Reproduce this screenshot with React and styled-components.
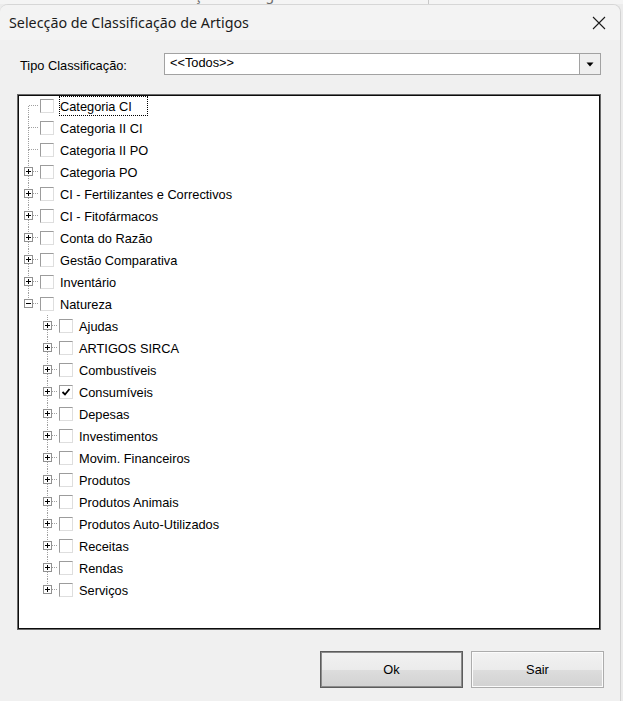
import React from "react";
import styled, { createGlobalStyle } from "styled-components";

const GlobalStyle = createGlobalStyle`
  html, body { margin: 0; padding: 0; background: #ececec; }
  body { font-family: "Liberation Sans", Arial, sans-serif; }
  * { box-sizing: border-box; }
`;

const UI_FONT = "12.8px";

const Page = styled.div`
  width: 623px;
  height: 701px;
  overflow: hidden;
  background: #ececec;
`;

const Backdrop = styled.div`
  display: flex;
  height: 4px;
  overflow: hidden;
  padding-left: 145px;
  background: #f4f4f4;
`;

const BackdropTitle = styled.div`
  width: 283px;
  margin-top: -13px;
  font-family: "Noto Sans", sans-serif;
  font-size: 14px;
  line-height: 16px;
  color: #6a6a6a;
  white-space: nowrap;
`;

const BackdropDivider = styled.div`
  width: 1px;
  background: #c8c8c8;
`;

const Dialog = styled.div`
  width: 621px;
  height: 697px;
  background: #f0f0f0;
  border-top: 1px solid #d6d6d6;
  border-right: 1px solid #d3d3d3;
  border-radius: 8px 8px 0 0;
  overflow: hidden;
  display: flex;
  flex-direction: column;
`;

const TitleBar = styled.div`
  height: 35px;
  display: flex;
  align-items: center;
  justify-content: space-between;
  padding-left: 9px;
  background: #f3f3f3;
`;

const Title = styled.div`
  font-family: "Noto Sans", sans-serif;
  font-size: 14.3px;
  color: #1b1b1b;
  white-space: nowrap;
`;

const CloseButton = styled.div`
  width: 40px;
  height: 35px;
  margin-right: 1px;
  display: flex;
  align-items: center;
  justify-content: center;
`;

const Body = styled.div`
  flex: 1;
  display: flex;
  flex-direction: column;
`;

const FilterRow = styled.div`
  display: flex;
  align-items: center;
  height: 22px;
  margin-top: 13px;
  padding-left: 20px;
`;

const FieldLabel = styled.div`
  width: 144px;
  font-size: ${UI_FONT};
  color: #000;
  padding-top: 3px;
`;

const Combo = styled.div`
  width: 437px;
  height: 22px;
  display: flex;
  background: #fff;
  border: 1px solid #a2a2a2;
`;

const ComboValue = styled.div`
  flex: 1;
  padding-left: 5px;
  font-size: ${UI_FONT};
  line-height: 18px;
  color: #000;
`;

const ComboButton = styled.div`
  width: 21px;
  display: flex;
  align-items: center;
  justify-content: center;
  background: #efefef;
  border-left: 1px solid #a2a2a2;
`;

const Tree = styled.div`
  width: 584px;
  height: 536px;
  margin: 19px 0 0 17px;
  padding-left: 1px;
  background: #fff;
  border: 1px solid #6a6a6a;
  box-shadow: inset 0 0 0 1px #0c0c0c;
`;

const Row = styled.div`
  display: flex;
  align-items: center;
  height: 22px;
`;

const Guide = styled.svg`
  flex: none;
  width: 19px;
  height: 22px;
  display: block;
`;

const CheckBox = styled.div`
  flex: none;
  width: 14px;
  height: 14px;
  margin-left: 2px;
  background: #fff;
  border: 1px solid;
  border-color: #9c9c9c #dedede #dedede #9c9c9c;
  display: flex;
  align-items: center;
  justify-content: center;
`;

const NodeLabel = styled.div`
  height: 20px;
  margin-left: 5px;
  padding: 1px 15px 0 0;
  border: 1px dotted ${(p) => (p.$focused ? "#000" : "transparent")};
  font-size: ${UI_FONT};
  line-height: 17px;
  color: #000;
  white-space: nowrap;
`;

const ButtonBar = styled.div`
  display: flex;
  justify-content: flex-end;
  gap: 8px;
  margin-top: 21px;
  padding-right: 16px;
`;

const Button = styled.div`
  width: ${(p) => p.$width}px;
  height: 37px;
  display: flex;
  align-items: center;
  justify-content: center;
  font-size: ${UI_FONT};
  color: #000;
  background: linear-gradient(#f2f2f2 0%, #ebebeb 50%, #dddddd 50%, #d2d2d2 100%);
  border: 1px solid ${(p) => (p.$default ? "#5c5c5c" : "#acacac")};
  box-shadow: inset 0 0 0 1px ${(p) => (p.$default ? "#8c8c8c" : "#fbfbfb")};
`;

const LINE = "#a0a0a0";

function TreeGuide({ own, vertTop, vertBottom, full, expandable, expanded }) {
  return (
    <Guide viewBox="0 0 19 22" shapeRendering="crispEdges">
      {full && (
        <line x1="9.5" y1="0" x2="9.5" y2="22" stroke={LINE} strokeDasharray="1 1" />
      )}
      {own && vertTop && (
        <line x1="9.5" y1="0" x2="9.5" y2="11" stroke={LINE} strokeDasharray="1 1" />
      )}
      {own && vertBottom && (
        <line x1="9.5" y1="11" x2="9.5" y2="22" stroke={LINE} strokeDasharray="1 1" />
      )}
      {own && (
        <line
          x1={expandable ? 14 : 10}
          y1="10.5"
          x2="19"
          y2="10.5"
          stroke={LINE}
          strokeDasharray="1 1"
        />
      )}
      {own && expandable && (
        <g>
          <rect x="5.5" y="6.5" width="8" height="8" fill="#fff" stroke="#919191" />
          <line x1="7" y1="10.5" x2="12" y2="10.5" stroke="#000" />
          {!expanded && <line x1="9.5" y1="8" x2="9.5" y2="13" stroke="#000" />}
        </g>
      )}
    </Guide>
  );
}

const roots = [
  { label: "Categoria CI", focused: true },
  { label: "Categoria II CI" },
  { label: "Categoria II PO" },
  { label: "Categoria PO", expandable: true },
  { label: "CI - Fertilizantes e Correctivos", expandable: true },
  { label: "CI - Fitofármacos", expandable: true },
  { label: "Conta do Razão", expandable: true },
  { label: "Gestão Comparativa", expandable: true },
  { label: "Inventário", expandable: true },
  {
    label: "Natureza",
    expandable: true,
    expanded: true,
    children: [
      { label: "Ajudas" },
      { label: "ARTIGOS SIRCA" },
      { label: "Combustíveis" },
      { label: "Consumíveis", checked: true },
      { label: "Depesas" },
      { label: "Investimentos" },
      { label: "Movim. Financeiros" },
      { label: "Produtos" },
      { label: "Produtos Animais" },
      { label: "Produtos Auto-Utilizados" },
      { label: "Receitas" },
      { label: "Rendas" },
      { label: "Serviços" },
    ],
  },
];

const rows = [];
roots.forEach((r, i) => {
  const rootLast = i === roots.length - 1;
  rows.push({ ...r, level: 0, first: i === 0, last: rootLast, ancestorsLast: [] });
  if (r.children) {
    r.children.forEach((c, j) =>
      rows.push({
        ...c,
        expandable: true,
        level: 1,
        first: false,
        last: j === r.children.length - 1,
        ancestorsLast: [rootLast],
      })
    );
  }
});

function TreeRow({ row }) {
  const guides = [];
  row.ancestorsLast.forEach((isLast, k) => {
    guides.push(<TreeGuide key={"a" + k} full={!isLast} />);
  });
  guides.push(
    <TreeGuide
      key="own"
      own
      vertTop={!(row.level === 0 && row.first)}
      vertBottom={!row.last}
      expandable={row.expandable}
      expanded={row.expanded}
    />
  );
  return (
    <Row>
      {guides}
      <CheckBox>
        {row.checked && (
          <svg width="10" height="10" viewBox="0 0 10 10">
            <path d="M1.5 5 L4 7.5 L8.5 2" fill="none" stroke="#000" strokeWidth="1.8" />
          </svg>
        )}
      </CheckBox>
      <NodeLabel $focused={row.focused}>{row.label}</NodeLabel>
    </Row>
  );
}

export default function App() {
  return (
    <Page>
      <GlobalStyle />
      <Backdrop>
        <BackdropTitle>Ordenação e Filtragem</BackdropTitle>
        <BackdropDivider />
      </Backdrop>
      <Dialog>
        <TitleBar>
          <Title>Selecção de Classificação de Artigos</Title>
          <CloseButton>
            <svg width="14" height="14" viewBox="0 0 14 14">
              <path d="M1 1 L13 13 M13 1 L1 13" stroke="#1b1b1b" strokeWidth="1.1" />
            </svg>
          </CloseButton>
        </TitleBar>
        <Body>
          <FilterRow>
            <FieldLabel>Tipo Classificação:</FieldLabel>
            <Combo>
              <ComboValue>&lt;&lt;Todos&gt;&gt;</ComboValue>
              <ComboButton>
                <svg width="8" height="5" viewBox="0 0 8 5">
                  <path d="M0.5 0.5 L7.5 0.5 L4 4.5 Z" fill="#000" />
                </svg>
              </ComboButton>
            </Combo>
          </FilterRow>
          <Tree>
            {rows.map((r) => (
              <TreeRow key={r.label} row={r} />
            ))}
          </Tree>
          <ButtonBar>
            <Button $default $width={143}>Ok</Button>
            <Button $width={133}>Sair</Button>
          </ButtonBar>
        </Body>
      </Dialog>
    </Page>
  );
}
